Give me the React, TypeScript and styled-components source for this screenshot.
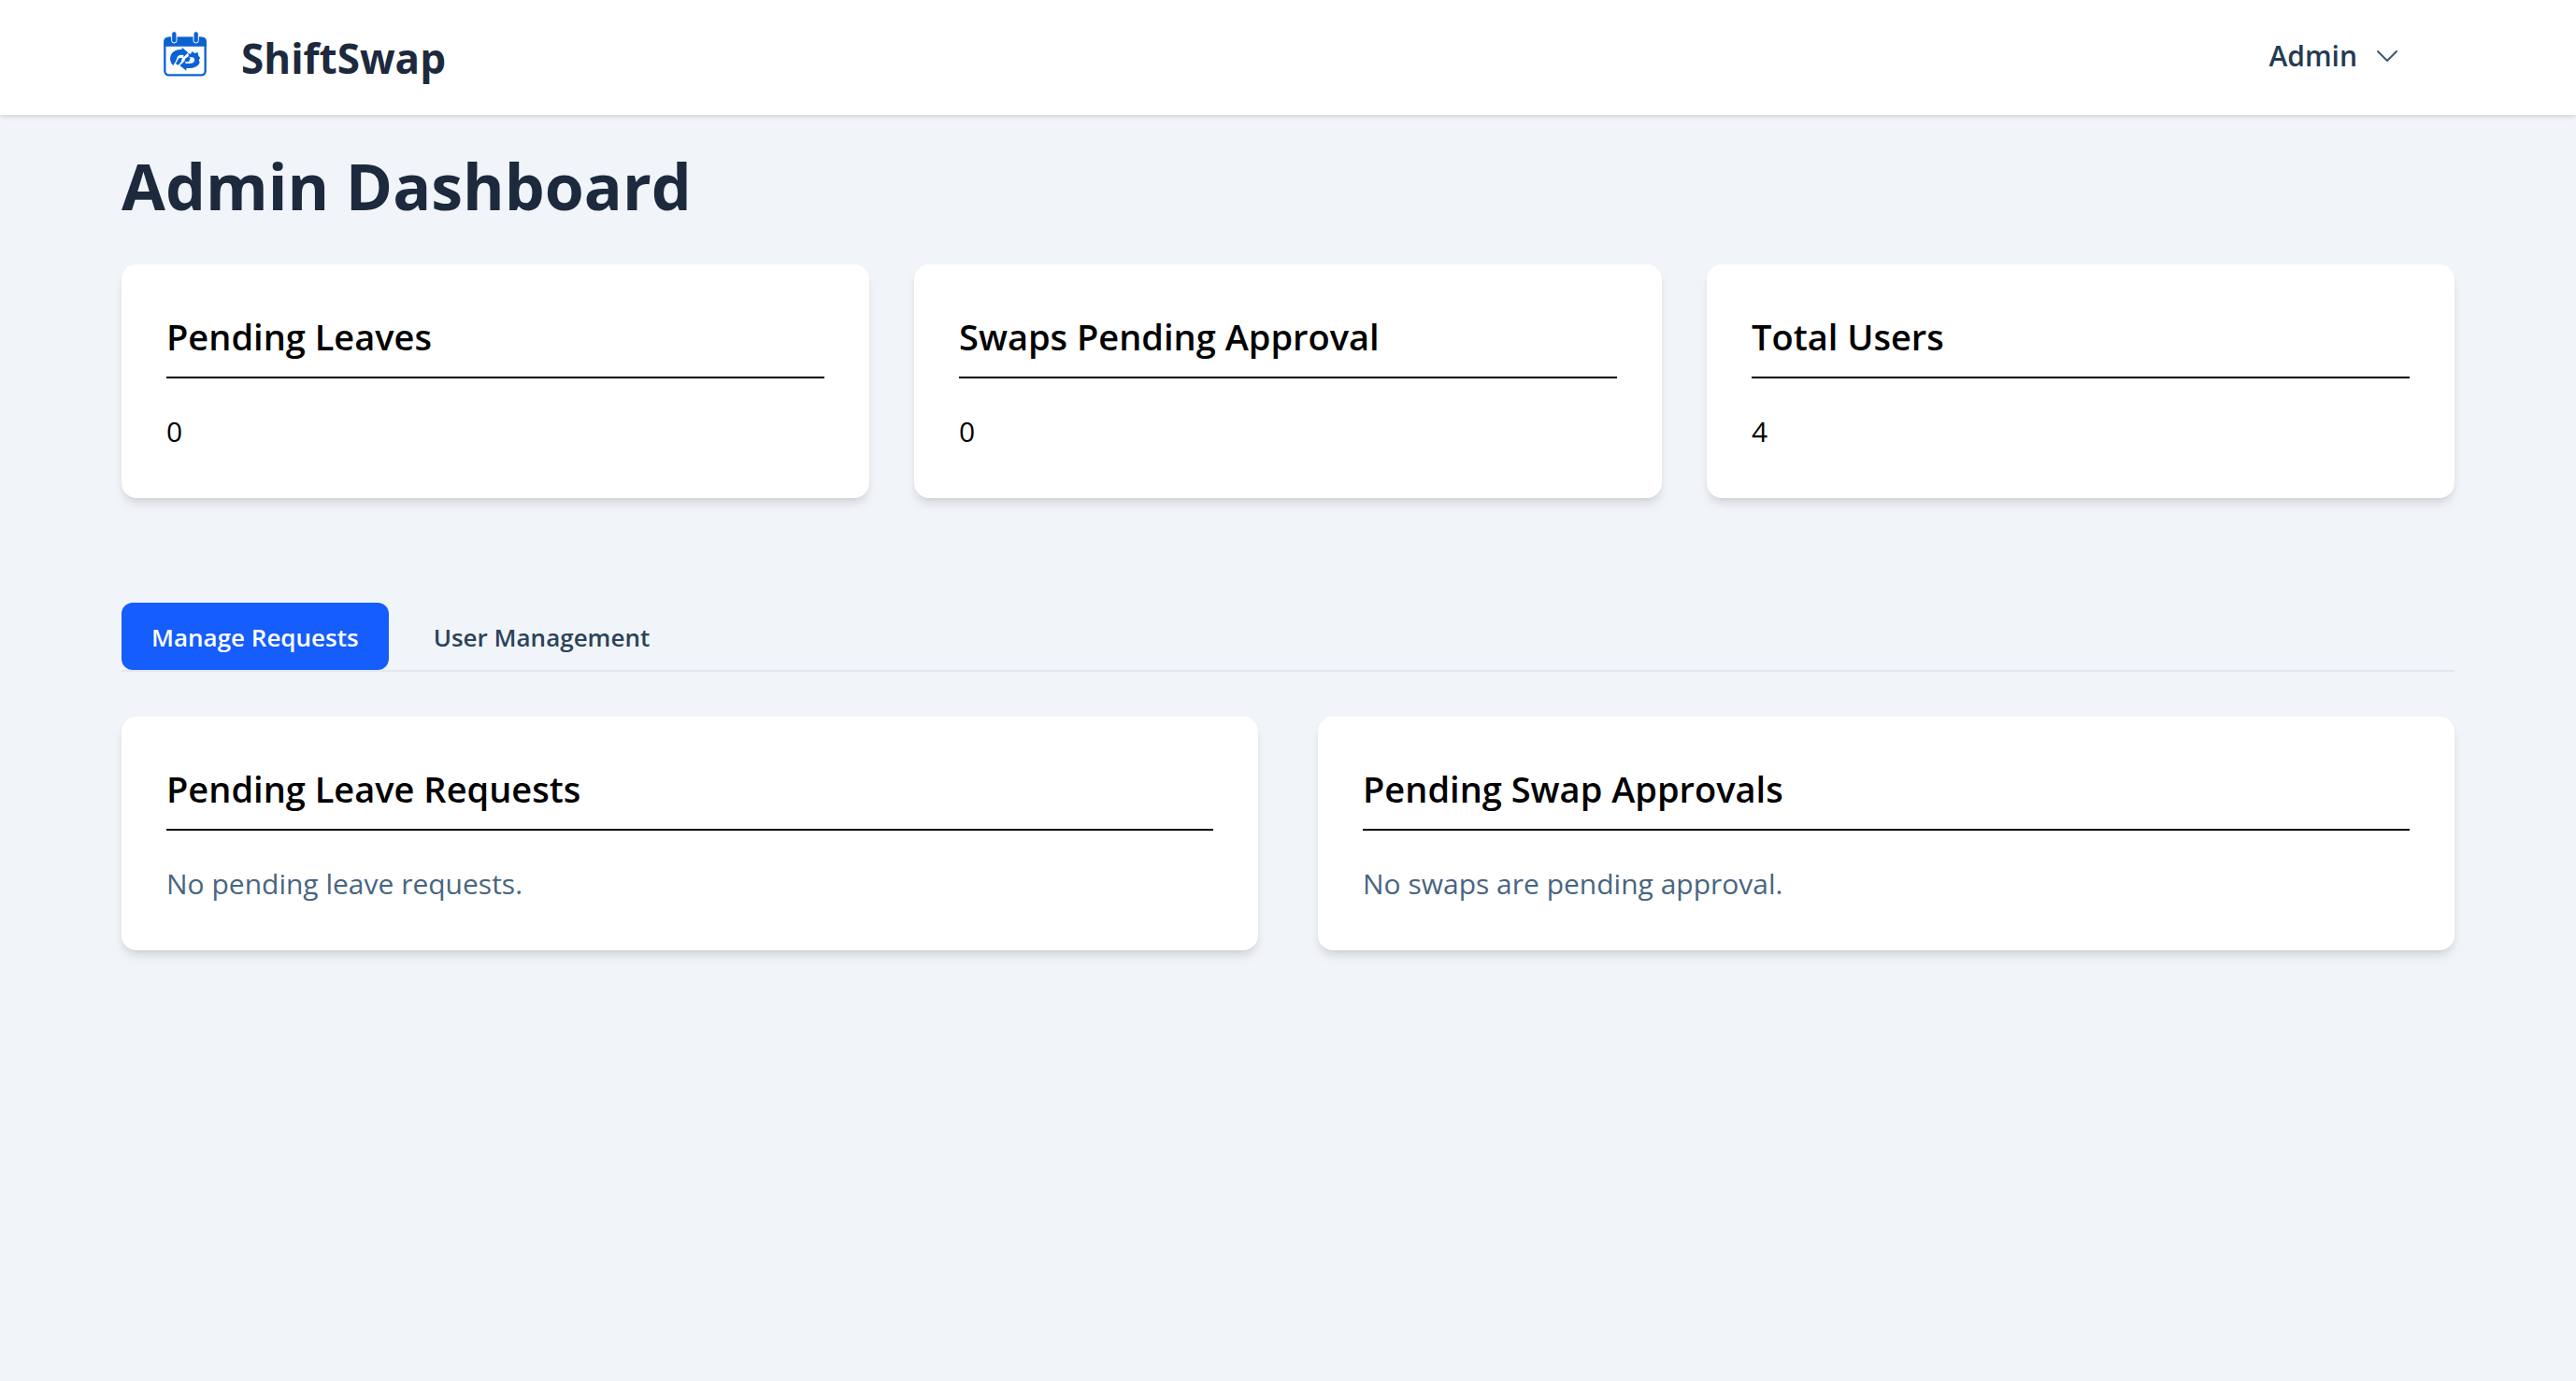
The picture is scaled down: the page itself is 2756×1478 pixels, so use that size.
import React, { useState } from "react";
import styled, { createGlobalStyle } from "styled-components";

const GlobalStyle = createGlobalStyle`
  *, *::before, *::after { box-sizing: border-box; }
  body {
    margin: 0;
    background: #f1f5f9;
    color: #000;
    font-family: "Segoe UI", "Open Sans", "Noto Sans", sans-serif;
    font-size: 30px;
    line-height: 50px;
  }
  h1, h2, p { margin: 0; }
  button { font: inherit; border: 0; background: none; cursor: pointer; }
`;

const Header = styled.header`
  background: #fff;
  box-shadow: 0 2px 6px rgba(0, 0, 0, 0.1), 0 2px 4px -2px rgba(0, 0, 0, 0.1);
`;

const Container = styled.div`
  max-width: 2560px;
  margin: 0 auto;
  padding: 0 32px;
`;

const HeaderRow = styled(Container)`
  display: flex;
  align-items: center;
  justify-content: space-between;
  min-height: 123px;
  padding: 0 64px;
`;

const Brand = styled.a`
  display: flex;
  align-items: center;
  gap: 24px;
  color: #1d293d;
  font-size: 44px;
  font-weight: 700;
  text-decoration: none;
`;

const LogoImage = styled.svg`
  width: 72px;
  height: 72px;
`;

const UserMenu = styled.button`
  display: flex;
  align-items: center;
  gap: 16px;
  padding: 14px 24px 18px;
  color: #243b53;
  font-weight: 600;
`;

const Chevron = styled.svg`
  width: 32px;
  height: 32px;
  color: #3b5876;
`;

const Main = styled(Container).attrs({ as: "main" })`
  padding-top: 32px;
  padding-bottom: 32px;
`;

const PageTitle = styled.h1`
  margin-bottom: 40px;
  color: #1d293d;
  font-size: 68px;
  line-height: 88px;
  font-weight: 700;
`;

const CardGrid = styled.div<{ $columns: number; $gap: number }>`
  display: grid;
  grid-template-columns: repeat(${(p) => p.$columns}, minmax(0, 1fr));
  gap: ${(p) => p.$gap}px;
`;

const Card = styled.section`
  padding: 48px 48px 46px;
  border-radius: 16px;
  background: #fff;
  box-shadow: 0 8px 12px -2px rgba(0, 0, 0, 0.1), 0 4px 8px -4px rgba(0, 0, 0, 0.1);
`;

const CardTitle = styled.h2`
  margin-bottom: 32px;
  padding-bottom: 14px;
  border-bottom: 2px solid #000;
  font-size: 38px;
  line-height: 58px;
  font-weight: 600;
`;

const EmptyText = styled.p`
  color: #486581;
`;

const Tabs = styled.div`
  display: flex;
  gap: 16px;
  margin: 112px 0 48px;
  border-bottom: 2px solid #e2e8f0;
`;

const Tab = styled.button<{ $active: boolean }>`
  padding: 16px 32px 14px;
  border-radius: 12px;
  background: ${(p) => (p.$active ? "#155dfc" : "transparent")};
  color: ${(p) => (p.$active ? "#fff" : "#2c435b")};
  font-size: 26px;
  line-height: 42px;
  font-weight: 600;
`;

const Logo = () => (
  <LogoImage viewBox="9 16 216 216" aria-hidden="true">
    <rect x="52" y="60" width="130" height="119" rx="13" fill="#fff" stroke="#0b62d3" strokeWidth="7" />
    <path d="M49 87V72q0-15 15-15h107q15 0 15 15v15Z" fill="#0b62d3" />
    <rect x="74" y="39" width="16" height="37" rx="8" fill="#0b62d3" stroke="#fff" strokeWidth="3" />
    <rect x="144" y="39" width="16" height="37" rx="8" fill="#0b62d3" stroke="#fff" strokeWidth="3" />
    <path
      d="M79 148C68 139 66 121 75 109C82 99 94 96 107 97V90L127 107L112 122V115C101 112 94 116 92 122L88 134C85 138 82 143 79 148Z"
      fill="#0b62d3"
    />
    <path d="M87 143L97 125L108 123L104 137L95 147Z" fill="#0b62d3" />
    <path
      d="M127 108L134 112L140 103L148 109L158 106L160 117L166 124L161 130L164 139C158 152 145 158 121 157V165L100 148L118 132V141C133 143 142 142 146 136C150 128 146 121 137 122L129 120Z"
      fill="#0b62d3"
    />
    <path d="M117 127L128 119L134 125L129 137L115 135Z" fill="#0b62d3" />
  </LogoImage>
);

const stats = [
  { title: "Pending Leaves", value: 0 },
  { title: "Swaps Pending Approval", value: 0 },
  { title: "Total Users", value: 4 },
];

const requests = [
  { title: "Pending Leave Requests", empty: "No pending leave requests." },
  { title: "Pending Swap Approvals", empty: "No swaps are pending approval." },
];

const tabs = ["Manage Requests", "User Management"];

export default function App() {
  const [active, setActive] = useState(tabs[0]);
  return (
    <>
      <GlobalStyle />
      <Header>
        <HeaderRow>
          <Brand href="#">
            <Logo />
            <span>ShiftSwap</span>
          </Brand>
          <UserMenu type="button" aria-haspopup="menu">
            Admin
            <Chevron viewBox="0 0 24 24" fill="none" stroke="currentColor" strokeWidth="1.5" strokeLinecap="round" strokeLinejoin="round" aria-hidden="true">
              <path d="m19.5 8.25-7.5 7.5-7.5-7.5" />
            </Chevron>
          </UserMenu>
        </HeaderRow>
      </Header>
      <Main>
        <PageTitle>Admin Dashboard</PageTitle>
        <CardGrid $columns={3} $gap={48}>
          {stats.map((s) => (
            <Card key={s.title}>
              <CardTitle>{s.title}</CardTitle>
              <p>{s.value}</p>
            </Card>
          ))}
        </CardGrid>
        <Tabs role="tablist">
          {tabs.map((t) => (
            <Tab key={t} type="button" role="tab" aria-selected={t === active} $active={t === active} onClick={() => setActive(t)}>
              {t}
            </Tab>
          ))}
        </Tabs>
        {active === tabs[0] && (
          <CardGrid $columns={2} $gap={64}>
            {requests.map((r) => (
              <Card key={r.title}>
                <CardTitle>{r.title}</CardTitle>
                <EmptyText>{r.empty}</EmptyText>
              </Card>
            ))}
          </CardGrid>
        )}
      </Main>
    </>
  );
}
